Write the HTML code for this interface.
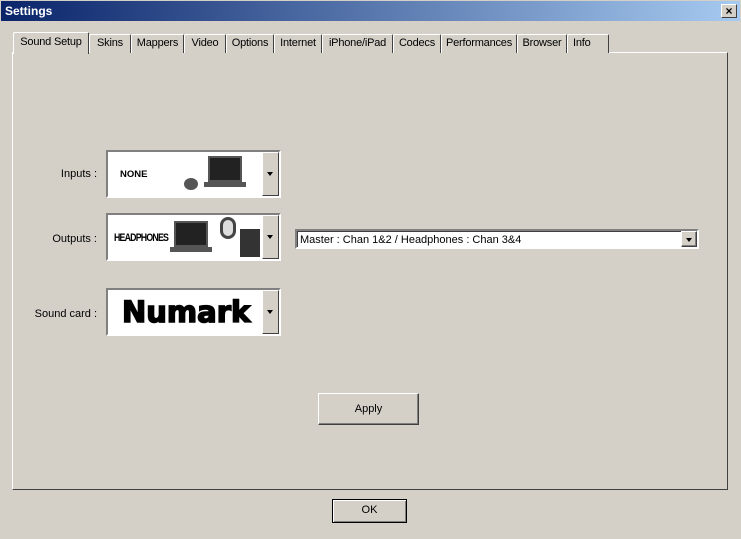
<!DOCTYPE html>
<html><head><style>
*{box-sizing:border-box;margin:0;padding:0}
body{width:741px;height:539px;background:#d4d0c8;font-family:"Liberation Sans",sans-serif;font-size:11px;position:relative;overflow:hidden;color:#000}
.abs{position:absolute}
.title{left:0;top:0;width:741px;height:21px;background:linear-gradient(90deg,#0a246a,#a6caf0);border:1px solid #d4d0c8;border-bottom:none}
.title span{position:absolute;left:4px;top:3px;color:#fff;font-weight:bold;font-size:12px}
.close{right:3px;top:3px;width:16px;height:14px;background:#d4d0c8;border:1px solid;border-color:#fff #404040 #404040 #fff;font-size:12px;font-weight:bold;text-align:center;line-height:12px}
.tab{top:34px;height:19px;border:1px solid;border-color:#fff #404040 transparent #fff;border-bottom:none;text-align:center;line-height:17px;font-size:11px;background:#d4d0c8;border-radius:2px 2px 0 0;white-space:nowrap;letter-spacing:-0.2px}
.panel{left:12px;top:52px;width:716px;height:438px;border:1px solid;border-color:#fff #404040 #404040 #fff}
.lbl{font-size:11px;text-align:right;width:90px}
.pic{left:106px;width:175px;height:48px;background:#fff;border:2px solid;border-color:#808080 #fff #fff #808080}
.pbtn{position:absolute;right:0;top:0;width:17px;height:44px;background:#d4d0c8;border:1px solid;border-color:#fff #404040 #404040 #fff}
.pbtn:after{content:"";position:absolute;left:4px;top:19px;border:3px solid transparent;border-top:4px solid #000}
.btn{background:#d4d0c8;border:1px solid;border-color:#fff #404040 #404040 #fff;text-align:center;box-shadow:inset -1px -1px #808080}
</style></head><body>
<div class="abs title"><span>Settings</span><div class="abs close">×</div></div>
<div class="abs panel"></div>
<div class="abs tab" style="left:13px;top:32px;width:76px;height:22px;line-height:19px;z-index:2">Sound Setup</div>
<div class="abs tab" style="left:89px;width:42px">Skins</div>
<div class="abs tab" style="left:131px;width:53px">Mappers</div>
<div class="abs tab" style="left:184px;width:42px">Video</div>
<div class="abs tab" style="left:226px;width:48px">Options</div>
<div class="abs tab" style="left:274px;width:48px">Internet</div>
<div class="abs tab" style="left:322px;width:71px">iPhone/iPad</div>
<div class="abs tab" style="left:393px;width:48px">Codecs</div>
<div class="abs tab" style="left:441px;width:76px">Performances</div>
<div class="abs tab" style="left:517px;width:50px">Browser</div>
<div class="abs tab" style="left:567px;width:42px;text-align:left;padding-left:5px">Info</div>

<div class="abs lbl" style="left:7px;top:168px">Inputs :</div>
<div class="abs lbl" style="left:7px;top:233px">Outputs :</div>
<div class="abs lbl" style="left:7px;top:308px">Sound card :</div>

<div class="abs pic" style="top:150px">
<div class="abs" style="left:12px;top:17px;font-weight:bold;font-size:9.5px">NONE</div>
<div class="abs" style="left:100px;top:4px;width:34px;height:26px;background:#222;border:2px solid #555"></div>
<div class="abs" style="left:96px;top:30px;width:42px;height:5px;background:#555"></div>
<div class="abs" style="left:76px;top:26px;width:14px;height:12px;background:#555;border-radius:50%"></div>
<div class="pbtn"></div></div>
<div class="abs pic" style="top:213px">
<div class="abs" style="left:6px;top:17px;font-weight:bold;font-size:11px;letter-spacing:-1px;transform:scaleX(.8);transform-origin:left">HEADPHONES</div>
<div class="abs" style="left:66px;top:6px;width:34px;height:26px;background:#222;border:2px solid #555"></div>
<div class="abs" style="left:62px;top:32px;width:42px;height:5px;background:#555"></div>
<div class="abs" style="left:112px;top:2px;width:16px;height:22px;border:3px solid #444;border-radius:8px;background:#ddd"></div>
<div class="abs" style="left:132px;top:14px;width:20px;height:28px;background:#333"></div>
<div class="pbtn"></div></div>
<div class="abs pic" style="top:288px">
<div class="abs" style="left:14px;top:5px;font-weight:900;font-size:29px;letter-spacing:0px;font-family:'DejaVu Sans',sans-serif;-webkit-text-stroke:1.5px #000;transform:scaleX(1.0)">Numark</div>
<div class="pbtn"></div></div>

<div class="abs" style="left:295px;top:229px;width:404px;height:20px;background:#fff;border:2px solid;border-color:#808080 #fff #fff #808080;box-shadow:inset 1px 1px #404040">
<span class="abs" style="left:3px;top:3px">Master : Chan 1&amp;2 / Headphones : Chan 3&amp;4</span>
<div class="abs btn" style="right:0;top:0;width:16px;height:16px"><div class="abs" style="left:4px;top:6px;border:3px solid transparent;border-top:4px solid #000"></div></div></div>

<div class="abs btn" style="left:318px;top:393px;width:101px;height:32px;line-height:30px">Apply</div>
<div class="abs btn" style="left:332px;top:499px;width:75px;height:24px;line-height:21px;border:1px solid #000;box-shadow:inset 1px 1px #fff,inset -1px -1px #808080">OK</div>
</body></html>
